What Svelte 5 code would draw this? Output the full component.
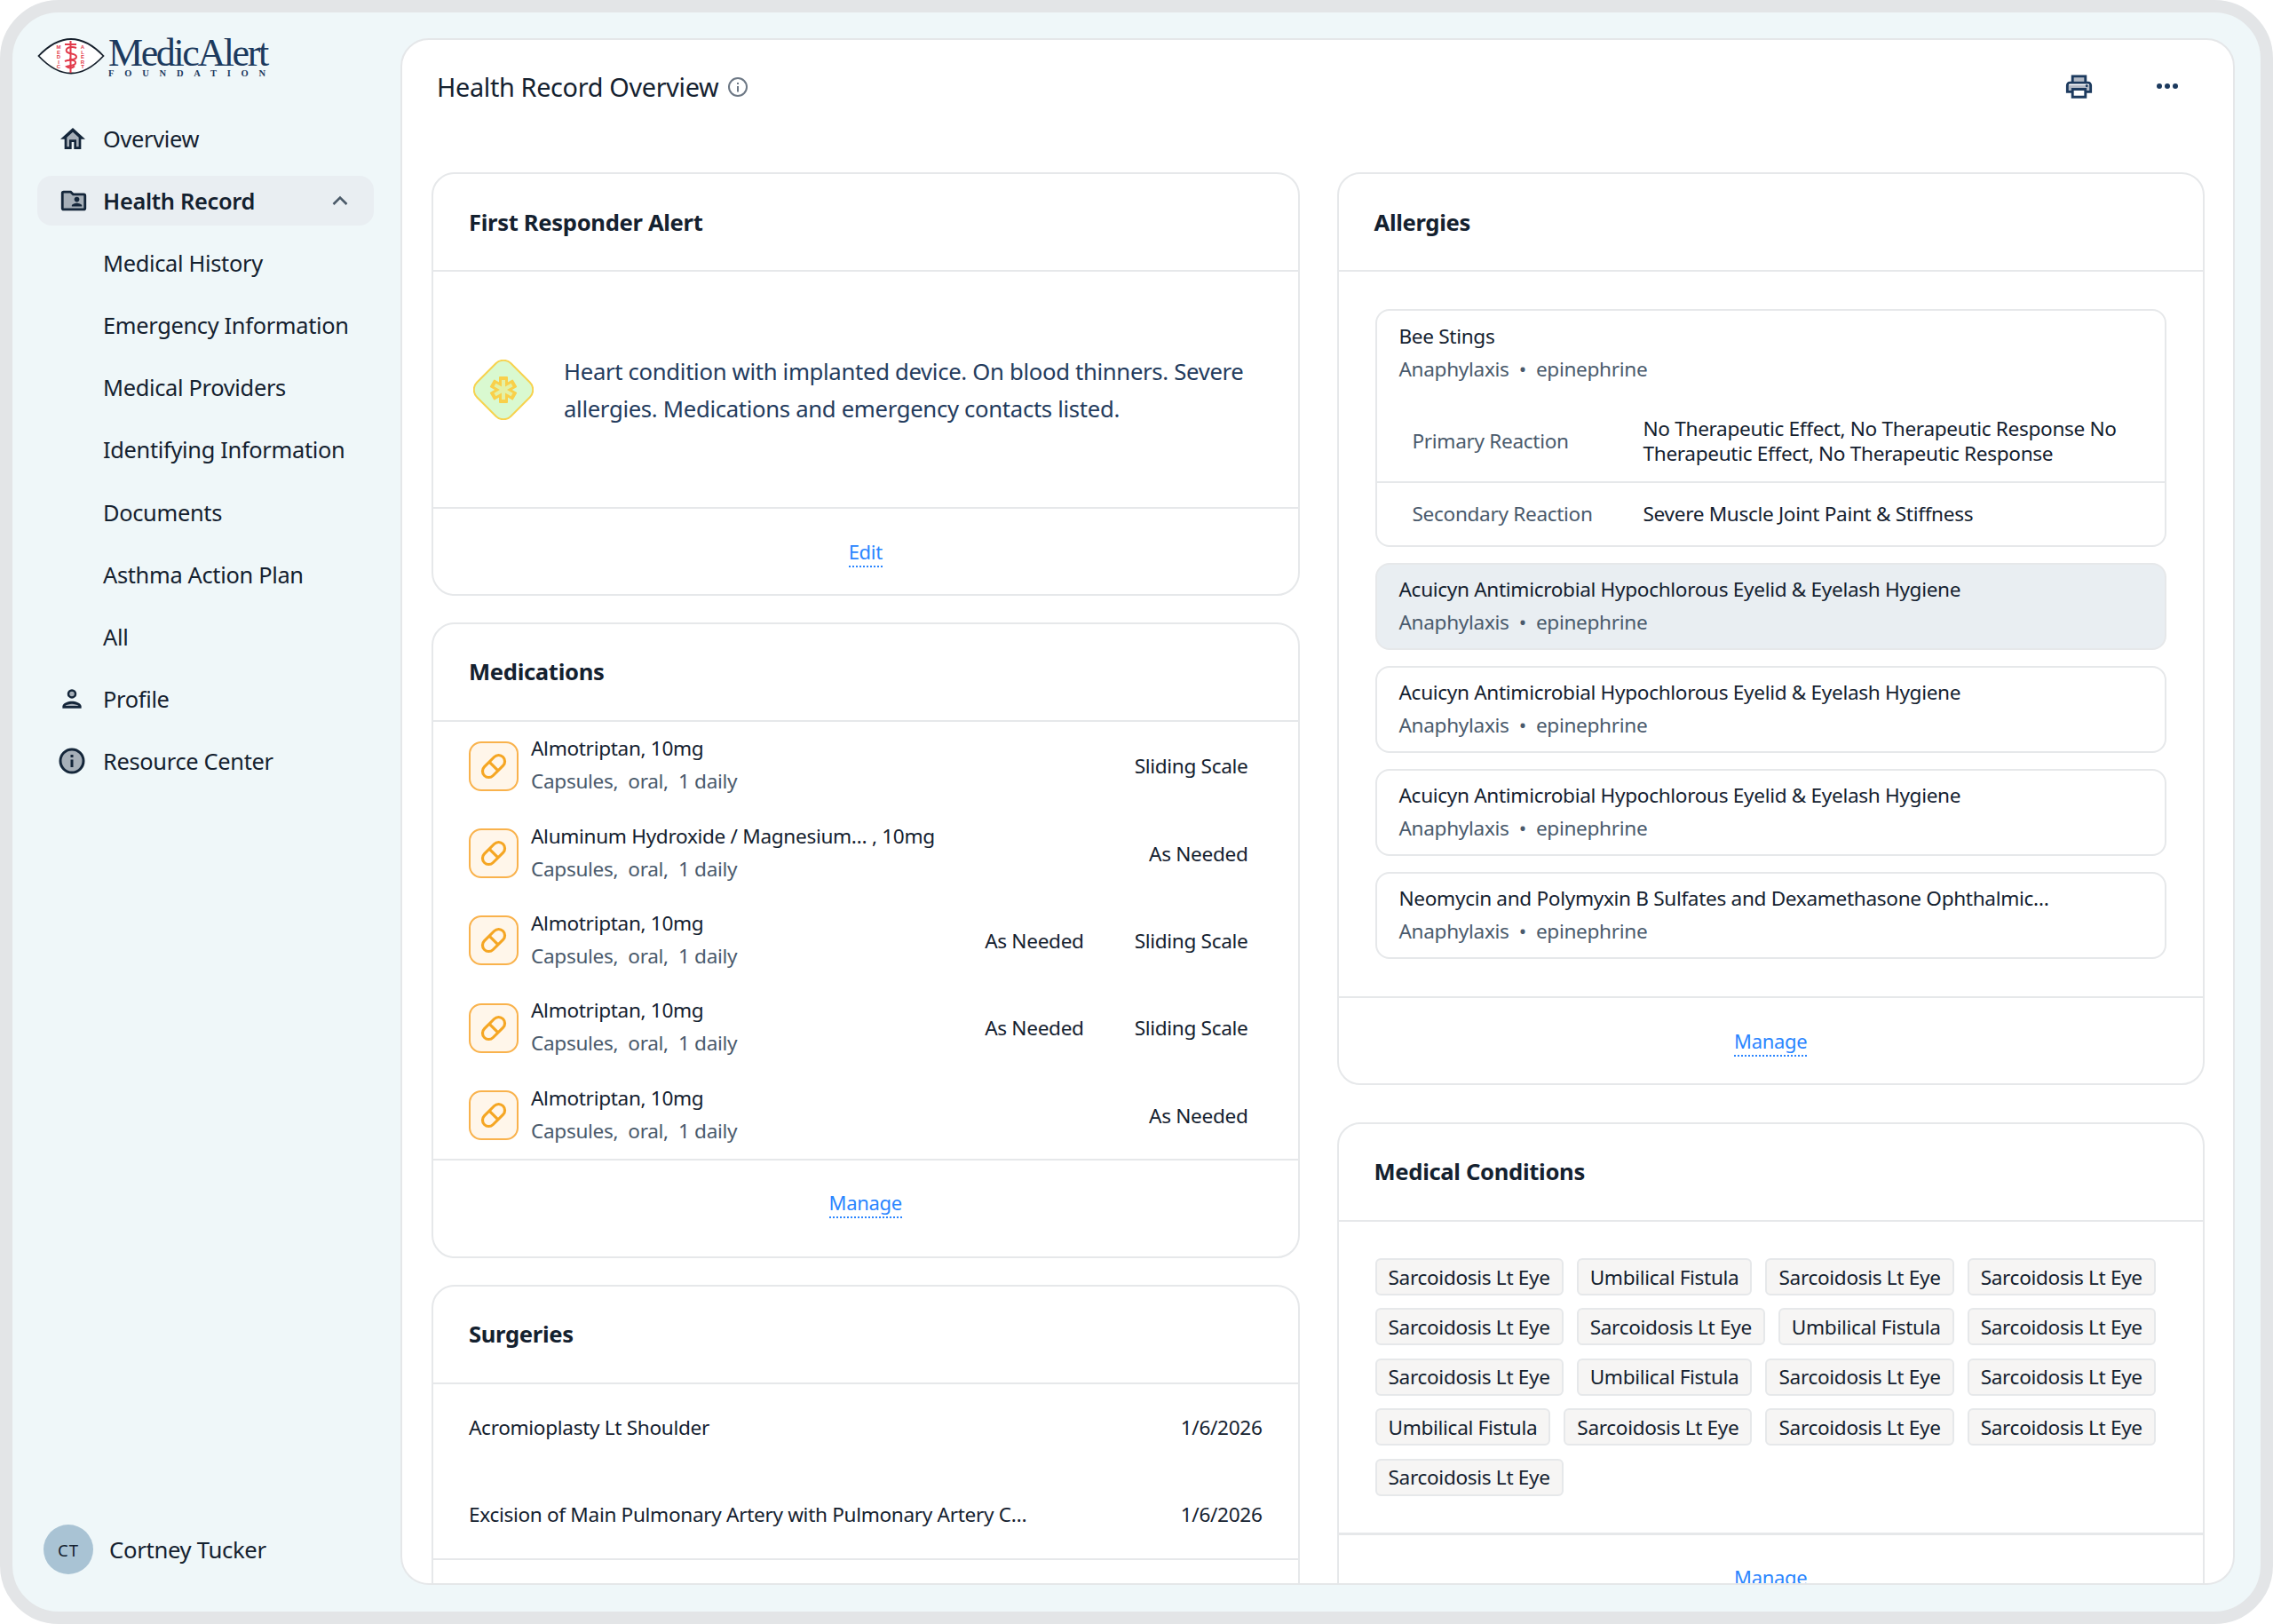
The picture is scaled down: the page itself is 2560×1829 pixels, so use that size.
<script>
  const subnav = [
    'Medical History',
    'Emergency Information',
    'Medical Providers',
    'Identifying Information',
    'Documents',
    'Asthma Action Plan',
    'All'
  ];

  const meds = [
    { name: 'Almotriptan, 10mg', tags: ['Sliding Scale'] },
    { name: 'Aluminum Hydroxide / Magnesium… , 10mg', tags: ['As Needed'] },
    { name: 'Almotriptan, 10mg', tags: ['As Needed', 'Sliding Scale'] },
    { name: 'Almotriptan, 10mg', tags: ['As Needed', 'Sliding Scale'] },
    { name: 'Almotriptan, 10mg', tags: ['As Needed'] }
  ];

  const surgeries = [
    { name: 'Acromioplasty Lt Shoulder', date: '1/6/2026' },
    { name: 'Excision of Main Pulmonary Artery with Pulmonary Artery C…', date: '1/6/2026' }
  ];

  const allergies = [
    { name: 'Acuicyn Antimicrobial Hypochlorous Eyelid & Eyelash Hygiene', active: true },
    { name: 'Acuicyn Antimicrobial Hypochlorous Eyelid & Eyelash Hygiene' },
    { name: 'Acuicyn Antimicrobial Hypochlorous Eyelid & Eyelash Hygiene' },
    { name: 'Neomycin and Polymyxin B Sulfates and Dexamethasone Ophthalmic…' }
  ];

  const S = 'Sarcoidosis Lt Eye';
  const U = 'Umbilical Fistula';
  const conditions = [S, U, S, S, S, S, U, S, S, U, S, S, U, S, S, S, S];
</script>

<div class="frame">
  <aside class="sidebar">
    <div class="logo">
      <svg class="eye" width="76" height="44" viewBox="0 0 76 44">
        <path d="M1.500 21 Q38 -17 74.500 21 Q38 60 1.500 21z" fill="#fff" stroke="#16202c" stroke-width="1.800" />
        <g fill="none" stroke="#e23a4b" stroke-width="2">
          <path d="M37.500 4v36" />
          <path d="M31 8h13" />
          <path d="M44 12c-6-2.500-13 0-11 4 2 3.500 11 1.500 11 6 0 3-5 3.500-8 2.500" />
          <path d="M31 27c4-2 13-2 12 2 0 3-6 2.500-10 4 3 2.500 7 1.500 9-.5" />
        </g>
        <g class="tiny" fill="#e23a4b" text-anchor="middle">
          <text x="24" y="13">M</text><text x="24" y="18.500">E</text><text x="24" y="24">D</text><text x="24" y="29.500">I</text><text x="24" y="35">C</text>
          <text x="51" y="13">A</text><text x="51" y="18.500">L</text><text x="51" y="24">E</text><text x="51" y="29.500">R</text><text x="51" y="35">T</text>
        </g>
      </svg>
      <div class="wordmark">
        <span class="brand">MedicAlert</span>
        <span class="foundation">FOUNDATION</span>
      </div>
    </div>

    <nav class="nav">
      <div class="nav-row">
        <svg class="nav-icon" viewBox="0 0 24 24" width="32" height="32">
          <path d="M12 3 1.500 12.500H5V21h6v-6h2v6h6v-8.500h3.500z" fill="#14263a" />
          <path d="M12 6.500l5 4.500v8h-2v-6H9v6H7v-8z" fill="#a6afb8" />
        </svg>
        <span>Overview</span>
      </div>
      <div class="nav-row active">
        <svg class="nav-icon" viewBox="0 0 24 24" width="34" height="34">
          <path d="M20 6h-8l-2-2H4a2 2 0 0 0-2 2v12a2 2 0 0 0 2 2h16a2 2 0 0 0 2-2V8a2 2 0 0 0-2-2z" fill="#14263a" />
          <path d="M4 6h5.200l2 2H20v10H4z" fill="#a6afb8" />
          <circle cx="14.500" cy="11" r="2" fill="#14263a" />
          <path d="M10.500 16.500v-.6c0-1.300 2.700-2 4-2s4 .7 4 2v.6z" fill="#14263a" />
        </svg>
        <span>Health Record</span>
        <svg class="chev" viewBox="0 0 18 12" width="18" height="12">
          <path d="M1.500 10 9 2.500 16.500 10" fill="none" stroke="#4b5a69" stroke-width="2.600" />
        </svg>
      </div>
      {#each subnav as item}
        <div class="nav-row"><span>{item}</span></div>
      {/each}
      <div class="nav-row">
        <svg class="nav-icon" viewBox="0 0 24 24" width="30" height="30">
          <circle cx="12" cy="7.500" r="3.200" fill="#a6afb8" stroke="#14263a" stroke-width="2" />
          <path d="M3.500 20.500v-1.700c0-3 5.700-4.600 8.500-4.600s8.500 1.600 8.500 4.600v1.700z" fill="#14263a" />
          <path d="M6 18.300c1-1 4-1.800 6-1.800s5 .8 6 1.800z" fill="#a6afb8" />
        </svg>
        <span>Profile</span>
      </div>
      <div class="nav-row">
        <svg class="nav-icon" viewBox="0 0 30 30" width="30" height="30">
          <circle cx="15" cy="15" r="13" fill="#a6afb8" stroke="#14263a" stroke-width="3" />
          <rect x="13.500" y="13.500" width="3" height="8.500" fill="#14263a" />
          <rect x="13.500" y="8" width="3" height="3" fill="#14263a" />
        </svg>
        <span>Resource Center</span>
      </div>
    </nav>

    <div class="user">
      <div class="avatar">CT</div>
      <span>Cortney Tucker</span>
    </div>
  </aside>

  <main class="panel">
    <header class="panel-head">
      <div class="panel-title">
        <h1>Health Record Overview</h1>
        <svg viewBox="0 0 24 24" width="24" height="24">
          <circle cx="12" cy="12" r="10" fill="none" stroke="#6d7885" stroke-width="2" />
          <rect x="11" y="11" width="2" height="6.500" fill="#6d7885" />
          <rect x="11" y="7" width="2" height="2" fill="#6d7885" />
        </svg>
      </div>
      <div class="panel-actions">
        <svg viewBox="0 0 24 24" width="35" height="35">
          <path d="M7 4h10v4H7z" fill="#b4bbc6" />
          <path d="M4 11h16v4h-2v-2H6v2H4z" fill="#b4bbc6" />
          <path d="M19 8h-1V3H6v5H5c-1.660 0-3 1.340-3 3v6h4v4h12v-4h4v-6c0-1.660-1.340-3-3-3zM8 5h8v3H8V5zm8 14H8v-4h8v4zm2-4v-2H6v2H4v-4c0-.550.450-1 1-1h14c.550 0 1 .450 1 1v4h-2z" fill="#1c3a5e" />
          <circle cx="18" cy="11.500" r="1" fill="#1c3a5e" />
        </svg>
        <svg viewBox="0 0 24 8" width="24" height="8">
          <circle cx="3" cy="4" r="3" fill="#1c3a5e" />
          <circle cx="12" cy="4" r="3" fill="#1c3a5e" />
          <circle cx="21" cy="4" r="3" fill="#1c3a5e" />
        </svg>
      </div>
    </header>

    <div class="columns">
      <div class="col left">
        <section class="card">
          <h2>First Responder Alert</h2>
          <div class="alert">
            <svg viewBox="0 0 68 68" width="68" height="68">
              <rect x="7" y="7" width="54" height="54" rx="12" transform="rotate(45 34 34)" fill="#d9f9d0" stroke="#f7d24e" stroke-width="2" />
              <g fill="#f9d04a">
                <rect x="29" y="19" width="10" height="30" rx="1" />
                <rect x="29" y="19" width="10" height="30" rx="1" transform="rotate(60 34 34)" />
                <rect x="29" y="19" width="10" height="30" rx="1" transform="rotate(120 34 34)" />
              </g>
              <g fill="#e4f1a6">
                <rect x="32" y="23" width="4" height="22" />
                <rect x="32" y="23" width="4" height="22" transform="rotate(60 34 34)" />
                <rect x="32" y="23" width="4" height="22" transform="rotate(120 34 34)" />
              </g>
            </svg>
            <p>Heart condition with implanted device. On blood thinners. Severe allergies. Medications and emergency contacts listed.</p>
          </div>
          <div class="foot short"><span class="link">Edit</span></div>
        </section>

        <section class="card">
          <h2>Medications</h2>
          <div class="meds">
            {#each meds as med}
              <div class="med">
                <div class="pill">
                  <svg viewBox="0 0 56 56" width="52" height="52">
                    <g transform="rotate(-45 28 28)" fill="none" stroke="#f5a623" stroke-width="3.400">
                      <rect x="12" y="20.500" width="32" height="15" rx="7.500" />
                      <path d="M28 20.500v15" />
                    </g>
                  </svg>
                </div>
                <div class="stack">
                  <div class="name">{med.name}</div>
                  <div class="sub">Capsules,&nbsp; oral,&nbsp; 1 daily</div>
                </div>
                <div class="tags">
                  {#each med.tags as tag}
                    <span>{tag}</span>
                  {/each}
                </div>
              </div>
            {/each}
          </div>
          <div class="foot"><span class="link">Manage</span></div>
        </section>

        <section class="card">
          <h2>Surgeries</h2>
          <div class="surgeries">
            {#each surgeries as s}
              <div class="surgery">
                <span>{s.name}</span>
                <span>{s.date}</span>
              </div>
            {/each}
          </div>
          <div class="surgery"></div>
        </section>
      </div>

      <div class="col right">
        <section class="card">
          <h2>Allergies</h2>
          <div class="allergies">
            <div class="allergy expanded">
              <div class="name">Bee Stings</div>
              <div class="sub">Anaphylaxis &nbsp;•&nbsp; epinephrine</div>
              <div class="reaction primary">
                <span class="label">Primary Reaction</span>
                <span class="value">No Therapeutic Effect, No Therapeutic Response No Therapeutic Effect, No Therapeutic Response</span>
              </div>
              <div class="reaction">
                <span class="label">Secondary Reaction</span>
                <span class="value">Severe Muscle Joint Paint &amp; Stiffness</span>
              </div>
            </div>
            {#each allergies as a}
              <div class="allergy" class:active={a.active}>
                <div class="name">{a.name}</div>
                <div class="sub">Anaphylaxis &nbsp;•&nbsp; epinephrine</div>
              </div>
            {/each}
          </div>
          <div class="foot short"><span class="link">Manage</span></div>
        </section>

        <section class="card">
          <h2>Medical Conditions</h2>
          <div class="chips">
            {#each conditions as c}
              <span class="chip">{c}</span>
            {/each}
          </div>
          <div class="foot thick"><span class="link">Manage</span></div>
        </section>
      </div>
    </div>
  </main>
</div>

<style>
  :global(body) {
    margin: 0;
    background: #fff;
    font-family: "Noto Sans", "Open Sans", sans-serif;
    color: #14212f;
    letter-spacing: -0.02em;
  }

  * {
    box-sizing: border-box;
  }

  .frame {
    width: 2560px;
    height: 1829px;
    display: flex;
    border: 14px solid #e3e5e7;
    border-radius: 66px;
    background: #eff7f9;
    padding: 29px 29px 30px 0;
    overflow: hidden;
  }

  .sidebar {
    width: 437px;
    margin-top: -29px;
    margin-bottom: -30px;
    flex-shrink: 0;
    display: flex;
    flex-direction: column;
    padding: 28px 30px 42px 28px;
  }

  .logo {
    display: flex;
    align-items: flex-start;
    gap: 4px;
    height: 85.500px;
  }

  .eye {
    flex-shrink: 0;
  }

  .tiny {
    font-family: "Liberation Sans", sans-serif;
    font-size: 6px;
    font-weight: 700;
    letter-spacing: 0;
  }

  .wordmark {
    display: flex;
    flex-direction: column;
    width: 182px;
  }

  .brand {
    font-family: "Liberation Serif", serif;
    font-size: 44px;
    line-height: 36px;
    letter-spacing: -2.400px;
    color: #1c3a5e;
    white-space: nowrap;
  }

  .foundation {
    font-family: "Liberation Serif", serif;
    font-size: 10.500px;
    font-weight: 700;
    line-height: 10px;
    letter-spacing: 11.800px;
    color: #1c3a5e;
    white-space: nowrap;
  }

  .nav {
    display: flex;
    flex-direction: column;
    gap: 14.200px;
  }

  .nav-row {
    position: relative;
    display: flex;
    align-items: center;
    height: 56px;
    padding-left: 24px;
    border-radius: 16px;
    font-size: 25.400px;
  }

  .nav-row > span {
    position: absolute;
    left: 74px;
  }

  .nav-row.active {
    background: #e9eef2;
    font-weight: 600;
  }

  .chev {
    margin-left: auto;
    margin-right: 29px;
  }

  .user {
    margin-top: auto;
    margin-left: 7px;
    display: flex;
    align-items: center;
    gap: 18px;
    font-size: 25.700px;
  }

  .avatar {
    width: 56px;
    height: 56px;
    border-radius: 50%;
    background: #a9c3d4;
    display: flex;
    align-items: center;
    justify-content: center;
    font-size: 18.500px;
    letter-spacing: 1px;
  }

  .panel {
    flex: 1;
    min-width: 0;
    display: flex;
    flex-direction: column;
    background: #fff;
    border: 2px solid #e5e7e9;
    border-radius: 32px;
    overflow: hidden;
  }

  .panel-head {
    height: 149px;
    flex-shrink: 0;
    display: flex;
    align-items: flex-start;
    justify-content: space-between;
    padding: 30px 62px 0 39px;
  }

  .panel-title {
    display: flex;
    align-items: center;
    gap: 10px;
    height: 46px;
  }

  h1 {
    margin: 0;
    font-size: 28.800px;
    font-weight: 400;
    line-height: 46px;
  }

  .panel-actions {
    display: flex;
    align-items: center;
    gap: 70px;
    height: 44px;
  }

  .columns {
    flex: 1;
    min-height: 0;
    display: flex;
    gap: 42px;
    padding: 0 32px 0 33px;
    overflow: hidden;
  }

  .col {
    flex: 1;
    min-width: 0;
    display: flex;
    flex-direction: column;
  }

  .col.left {
    gap: 29.500px;
  }

  .col.right {
    gap: 42px;
  }

  .card {
    flex-shrink: 0;
    border: 2px solid #e6e8ea;
    border-radius: 26px;
    background: #fff;
  }

  h2 {
    margin: 0;
    height: 110px;
    display: flex;
    align-items: center;
    padding-left: 40px;
    font-size: 25.600px;
    font-weight: 700;
    border-bottom: 2px solid #e6e8ea;
  }

  .alert {
    height: 267px;
    display: flex;
    align-items: center;
    gap: 34px;
    padding: 0 40px 0 45px;
    border-bottom: 2px solid #e6e8ea;
  }

  .alert svg {
    flex-shrink: 0;
  }

  .alert p {
    margin: 0;
    padding-top: 3px;
    font-size: 25.700px;
    line-height: 42px;
    color: #233b5d;
  }

  .foot {
    height: 108px;
    padding-top: 31px;
    display: flex;
    justify-content: center;
    align-items: flex-start;
  }

  .foot.short {
    height: 96px;
    padding-top: 32px;
  }

  .foot.thick {
    border-top: 3px solid #e6e8ea;
    padding-top: 31px;
  }

  .link {
    font-size: 22px;
    line-height: 32px;
    color: #2a85ff;
    border-bottom: 2px dotted #2a85ff;
  }

  .meds {
    padding-top: 1px;
    border-bottom: 2px solid #e6e8ea;
  }

  .med {
    height: 98.400px;
    display: flex;
    align-items: center;
    padding: 0 56px 0 40px;
  }

  .pill {
    width: 56px;
    height: 56px;
    flex-shrink: 0;
    border: 2px solid #f9b24c;
    border-radius: 14px;
    background: #fff6ea;
    display: flex;
    align-items: center;
    justify-content: center;
    margin-right: 14px;
  }

  .stack {
    margin-top: -3px;
  }

  .name {
    font-size: 22.600px;
    line-height: 37px;
    white-space: nowrap;
  }

  .sub {
    font-size: 22.600px;
    line-height: 37px;
    color: #4a5a6c;
    white-space: nowrap;
  }

  .tags {
    margin-left: auto;
    display: flex;
    gap: 57px;
    font-size: 22.600px;
  }

  .surgeries {
    border-bottom: 2px solid #e6e8ea;
  }

  .surgery {
    height: 98px;
    display: flex;
    align-items: center;
    justify-content: space-between;
    padding: 0 40px;
    font-size: 22.600px;
  }

  .allergies {
    display: flex;
    flex-direction: column;
    gap: 18px;
    padding: 42px 41px 42px;
    border-bottom: 2px solid #e6e8ea;
  }

  .allergy {
    min-height: 98px;
    padding: 9.500px 25px 10px;
    border: 2px solid #e6e8ea;
    border-radius: 16px;
  }

  .allergy.active {
    background: #e9eef2;
  }

  .allergy.expanded {
    padding-bottom: 0;
  }

  .reaction {
    display: flex;
    align-items: center;
    height: 70px;
    margin: 0 -25px;
    padding: 0 40px;
    font-size: 22.600px;
  }

  .reaction.primary {
    height: 92px;
    margin-top: 18px;
    border-bottom: 2px solid #e6e8ea;
  }

  .label {
    width: 260px;
    flex-shrink: 0;
    color: #4a5a6c;
  }

  .value {
    line-height: 28px;
  }

  .chips {
    display: flex;
    flex-wrap: wrap;
    gap: 14.400px 15px;
    padding: 41.500px 41px 41px;
  }

  .chip {
    height: 42px;
    padding: 0 13px;
    display: flex;
    align-items: center;
    font-size: 22.600px;
    border: 2px solid #e6e8ea;
    border-radius: 6px;
    background: #f6f5f4;
  }
</style>
